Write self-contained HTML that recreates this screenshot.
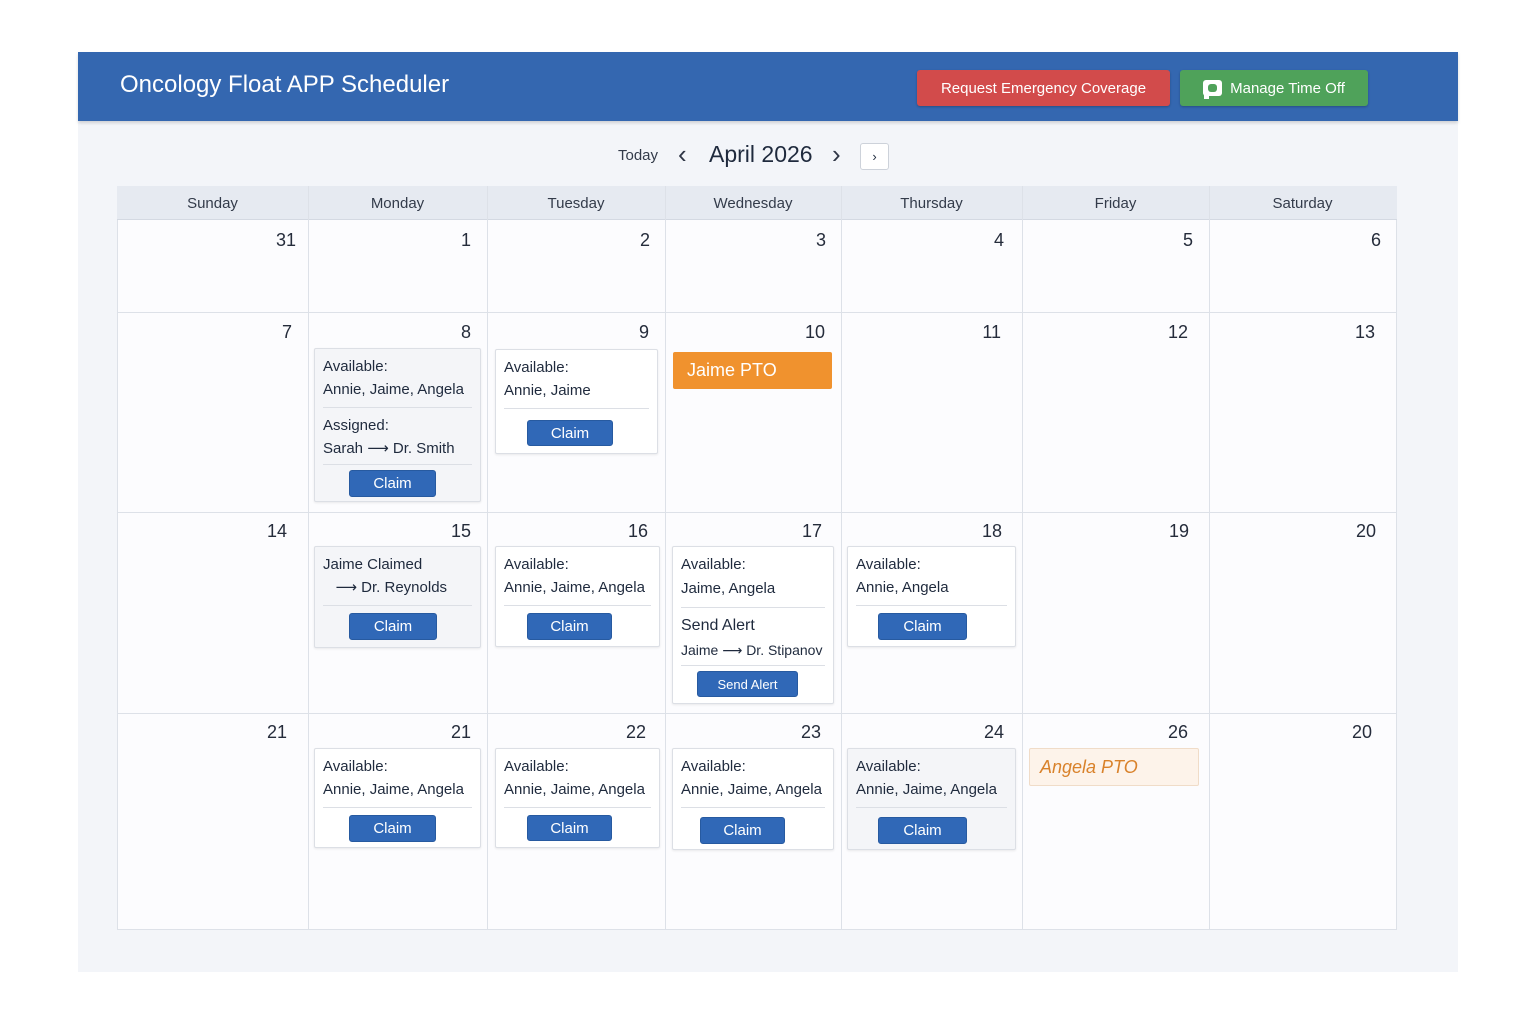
<!DOCTYPE html>
<html><head><meta charset="utf-8"><style>
*{margin:0;padding:0;box-sizing:border-box}
body{width:1536px;height:1024px;background:#fff;font-family:"Liberation Sans","DejaVu Sans",sans-serif;color:#1f2a3d;position:relative;overflow:hidden}
.abs{position:absolute}
#panel{left:78px;top:52px;width:1380px;height:920px;background:#f3f5f9}
#hdr{left:78px;top:52px;width:1380px;height:69px;background:#3467b0;box-shadow:0 2px 3px rgba(0,0,0,.15)}
.title{left:120px;top:71px;color:#fff;font-size:24px;}
.btn{border-radius:3px;color:#fff;font-size:15px;display:flex;align-items:center;justify-content:center;box-shadow:0 1px 2px rgba(0,0,0,.25)}
.grid{left:117px;top:186px;width:1280px;height:744px;background:#fcfcfe;border:1px solid #dde1e8}
.hrow{left:117px;top:186px;width:1280px;height:34px;background:#e6eaf1;border-bottom:1px solid #d4d9e2}
.vl{width:1px;background:#dde1e8;top:186px;height:744px}
.hl{height:1px;background:#dde1e8;left:117px;width:1280px}
.dn{font-size:15px;color:#333b4a;text-align:center;top:195px}
.num{font-size:18px;color:#252c3b;text-align:right}
.card{background:#fff;border:1px solid #dcdfe5;border-radius:2px;box-shadow:0 1px 2px rgba(0,0,0,.08);padding:6px 8px 0 8px;font-size:15px;line-height:23px;color:#1f2a3d}
.card.g{background:#f4f5f8}
.dv{height:1px;background:#dcdfe5;margin:6px 0 6px}
.cb{position:absolute;background:#3068b7;color:#fff;border-radius:3px;font-size:15px;display:flex;align-items:center;justify-content:center;border:1px solid #275aa0}
</style></head><body>
<div id="panel" class="abs"></div>
<div id="hdr" class="abs"></div>
<div class="abs title">Oncology Float APP Scheduler</div>
<div class="abs btn" style="left:917px;top:70px;width:253px;height:36px;background:#d24b4b">Request Emergency Coverage</div>
<div class="abs btn" style="left:1180px;top:70px;width:188px;height:36px;background:#4fa25a"><span style="display:inline-block;width:19px;height:16px;background:#fff;border-radius:3px;margin-right:8px;position:relative"><span style="position:absolute;left:5px;top:4px;width:9px;height:8px;background:#4fa25a;border-radius:3px"></span><span style="position:absolute;left:1px;bottom:-3px;width:5px;height:4px;background:#fff"></span></span>Manage Time Off</div>

<div class="abs" style="left:618px;top:147px;font-size:15px;color:#333b4a">Today</div>
<div class="abs" style="left:678px;top:139px;font-size:26px;color:#2f3646">&#8249;</div>
<div class="abs" style="left:709px;top:141px;font-size:23px;color:#1f2a3d">April 2026</div>
<div class="abs" style="left:832px;top:139px;font-size:26px;color:#2f3646">&#8250;</div>
<div class="abs" style="left:860px;top:143px;width:29px;height:27px;border:1px solid #cdd2da;border-radius:3px;background:#fff;font-size:13px;text-align:center;line-height:25px">&#8250;</div>

<div class="abs grid"></div>
<div class="abs hrow"></div>
<div class="abs hl" style="top:312px"></div>
<div class="abs hl" style="top:512px"></div>
<div class="abs hl" style="top:713px"></div>
<div class="abs vl" style="left:308px"></div>
<div class="abs vl" style="left:487px"></div>
<div class="abs vl" style="left:665px"></div>
<div class="abs vl" style="left:841px"></div>
<div class="abs vl" style="left:1022px"></div>
<div class="abs vl" style="left:1209px"></div>

<div class="abs dn" style="left:117px;width:191px">Sunday</div>
<div class="abs dn" style="left:308px;width:179px">Monday</div>
<div class="abs dn" style="left:487px;width:178px">Tuesday</div>
<div class="abs dn" style="left:665px;width:176px">Wednesday</div>
<div class="abs dn" style="left:841px;width:181px">Thursday</div>
<div class="abs dn" style="left:1022px;width:187px">Friday</div>
<div class="abs dn" style="left:1209px;width:187px">Saturday</div>

<div class="abs num" style="left:200px;width:96px;top:230px">31</div>
<div class="abs num" style="left:380px;width:91px;top:230px">1</div>
<div class="abs num" style="left:560px;width:90px;top:230px">2</div>
<div class="abs num" style="left:730px;width:96px;top:230px">3</div>
<div class="abs num" style="left:910px;width:94px;top:230px">4</div>
<div class="abs num" style="left:1100px;width:93px;top:230px">5</div>
<div class="abs num" style="left:1290px;width:91px;top:230px">6</div>

<div class="abs num" style="left:200px;width:92px;top:322px">7</div>
<div class="abs num" style="left:380px;width:91px;top:322px">8</div>
<div class="abs num" style="left:560px;width:89px;top:322px">9</div>
<div class="abs num" style="left:730px;width:95px;top:322px">10</div>
<div class="abs num" style="left:910px;width:91px;top:322px">11</div>
<div class="abs num" style="left:1100px;width:88px;top:322px">12</div>
<div class="abs num" style="left:1290px;width:85px;top:322px">13</div>

<div class="abs num" style="left:200px;width:87px;top:521px">14</div>
<div class="abs num" style="left:380px;width:91px;top:521px">15</div>
<div class="abs num" style="left:560px;width:88px;top:521px">16</div>
<div class="abs num" style="left:730px;width:92px;top:521px">17</div>
<div class="abs num" style="left:910px;width:92px;top:521px">18</div>
<div class="abs num" style="left:1100px;width:89px;top:521px">19</div>
<div class="abs num" style="left:1290px;width:86px;top:521px">20</div>

<div class="abs num" style="left:200px;width:87px;top:722px">21</div>
<div class="abs num" style="left:380px;width:91px;top:722px">21</div>
<div class="abs num" style="left:560px;width:86px;top:722px">22</div>
<div class="abs num" style="left:730px;width:91px;top:722px">23</div>
<div class="abs num" style="left:910px;width:94px;top:722px">24</div>
<div class="abs num" style="left:1100px;width:88px;top:722px">26</div>
<div class="abs num" style="left:1290px;width:82px;top:722px">20</div>

<div class="abs card g" style="left:314px;top:348px;width:167px;height:154px">Available:<br>Annie, Jaime, Angela<div class="dv"></div>Assigned:<br>Sarah &#10230; Dr. Smith<div class="dv" style="margin-top:4px"></div></div>
<div class="cb" style="left:349px;top:470px;width:87px;height:27px">Claim</div>
<div class="abs card" style="left:495px;top:349px;width:163px;height:105px">Available:<br>Annie, Jaime<div class="dv"></div></div>
<div class="cb" style="left:527px;top:420px;width:86px;height:26px">Claim</div>
<div class="abs" style="left:673px;top:352px;width:159px;height:37px;background:#f0922e;border-radius:2px;color:#fff;font-size:18px;padding:8px 14px">Jaime PTO</div>

<div class="abs card g" style="left:314px;top:546px;width:167px;height:102px">Jaime Claimed<br>&nbsp;&nbsp;&nbsp;&#10230; Dr. Reynolds<div class="dv"></div></div>
<div class="cb" style="left:349px;top:613px;width:88px;height:27px">Claim</div>
<div class="abs card" style="left:495px;top:546px;width:165px;height:101px">Available:<br>Annie, Jaime, Angela<div class="dv"></div></div>
<div class="cb" style="left:527px;top:613px;width:85px;height:27px">Claim</div>
<div class="abs card" style="left:672px;top:546px;width:162px;height:158px;line-height:24px">Available:<br>Jaime, Angela<div class="dv"></div><span style="font-size:16px">Send Alert</span><br><span style="font-size:14px;white-space:nowrap">Jaime &#10230; Dr. Stipanov</span><div class="dv" style="margin-top:2px"></div></div>
<div class="cb" style="left:697px;top:671px;width:101px;height:26px;font-size:13px">Send Alert</div>
<div class="abs card" style="left:847px;top:546px;width:169px;height:101px">Available:<br>Annie, Angela<div class="dv"></div></div>
<div class="cb" style="left:878px;top:613px;width:89px;height:27px">Claim</div>

<div class="abs card" style="left:314px;top:748px;width:167px;height:100px">Available:<br>Annie, Jaime, Angela<div class="dv"></div></div>
<div class="cb" style="left:349px;top:815px;width:87px;height:27px">Claim</div>
<div class="abs card" style="left:495px;top:748px;width:165px;height:100px">Available:<br>Annie, Jaime, Angela<div class="dv"></div></div>
<div class="cb" style="left:527px;top:815px;width:85px;height:26px">Claim</div>
<div class="abs card" style="left:672px;top:748px;width:162px;height:102px">Available:<br>Annie, Jaime, Angela<div class="dv"></div></div>
<div class="cb" style="left:700px;top:817px;width:85px;height:27px">Claim</div>
<div class="abs card g" style="left:847px;top:748px;width:169px;height:102px">Available:<br>Annie, Jaime, Angela<div class="dv"></div></div>
<div class="cb" style="left:878px;top:817px;width:89px;height:27px">Claim</div>
<div class="abs" style="left:1029px;top:748px;width:170px;height:38px;background:#fdf3ea;border:1px solid #f0dcc8;border-radius:2px;color:#d9822b;font-style:italic;font-size:18px;padding:8px 10px">Angela PTO</div>
</body></html>
